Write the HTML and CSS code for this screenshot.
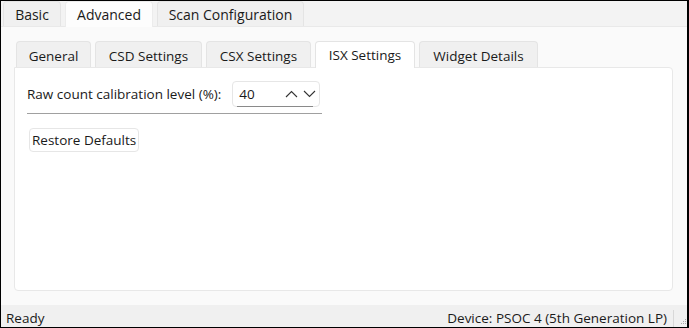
FILE: index.html
```html
<!DOCTYPE html>
<html>
<head>
<meta charset="utf-8">
<link rel="stylesheet" href="styles.css">
</head>
<body>
<div class="window">
  <div class="tabbar">
    <div class="tab tab-basic">Basic</div>
    <div class="tab tab-adv active">Advanced</div>
    <div class="tab tab-scan">Scan Configuration</div>
  </div>
  <div class="page">
    <div class="subtabbar">
      <div class="subtab st-general">General</div>
      <div class="subtab st-csd">CSD Settings</div>
      <div class="subtab st-csx">CSX Settings</div>
      <div class="subtab st-isx active">ISX Settings</div>
      <div class="subtab st-widget">Widget Details</div>
    </div>
    <div class="panel">
      <div class="field-row">
        <span class="label">Raw count calibration level (%):</span>
        <div class="spin">
          <span class="spin-value">40</span>
          <svg class="chev" width="13" height="8" viewBox="0 0 13 8"><path d="M1 7 L6.5 1.5 L12 7" fill="none" stroke="#333" stroke-width="1.1"/></svg>
          <svg class="chev" width="13" height="8" viewBox="0 0 13 8"><path d="M1 1 L6.5 6.5 L12 1" fill="none" stroke="#333" stroke-width="1.1"/></svg>
          <div class="spin-underline"></div>
        </div>
      </div>
      <div class="separator"></div>
      <button class="btn">Restore Defaults</button>
    </div>
  </div>
  <div class="statusbar">
    <span class="status-left">Ready</span>
    <span class="status-right">Device: PSOC 4 (5th Generation LP)</span>
    <span class="status-sep"></span>
    <svg class="grip" width="6" height="6" viewBox="0 0 6 6"><rect x="4" y="0" width="1" height="1" fill="#aaa"/><rect x="2" y="2" width="1" height="1" fill="#aaa"/><rect x="4" y="2" width="1" height="1" fill="#aaa"/><rect x="0" y="4" width="1" height="1" fill="#aaa"/><rect x="2" y="4" width="1" height="1" fill="#aaa"/><rect x="4" y="4" width="1" height="1" fill="#aaa"/></svg>
  </div>
</div>
</body>
</html>
```
FILE: styles.css
```css
* { box-sizing: border-box; }
html, body { margin: 0; padding: 0; }
body {
  width: 689px;
  height: 328px;
  font-family: "Open Sans", "Noto Sans", sans-serif;
  font-size: 13.5px;
  color: #1a1a1a;
  background: #000;
}
.window {
  width: 689px;
  height: 328px;
  border: 1px solid #000;
  border-right-width: 2px;
  display: flex;
  flex-direction: column;
  background: #f3f3f3;
}
.tabbar {
  height: 26px;
  display: flex;
  align-items: flex-end;
  gap: 4px;
  padding-left: 2px;
  background: #f3f3f3;
  border-bottom: 1px solid #e9e9e9;
}
.tab {
  height: 25px;
  border: 1px solid #e4e4e4;
  border-bottom: none;
  border-radius: 4px 4px 0 0;
  background: #f0f0f0;
  display: flex;
  align-items: center;
  justify-content: center;
  font-size: 14px;
}
.tab-basic { width: 58px; }
.tab-adv { width: 88px; }
.tab-scan { width: 147px; }
.tab.active {
  background: #fdfdfd;
  height: 26px;
  margin-bottom: -1px;
  border-color: #ececec;
}
.page {
  flex: 1;
  background: #fafafa;
  padding: 13px 14px 14px 13px;
  display: flex;
  flex-direction: column;
}
.subtabbar {
  display: flex;
  gap: 4px;
  padding-left: 2px;
  height: 27px;
  align-items: flex-end;
}
.subtab {
  height: 26px;
  border: 1px solid #e4e4e4;
  border-bottom: none;
  border-radius: 4px 4px 0 0;
  background: #f0f0f0;
  display: flex;
  align-items: center;
  justify-content: center;
  padding-top: 2px;
}
.st-general { width: 75px; }
.st-csd { width: 107px; }
.st-csx { width: 105px; }
.st-isx { width: 100px; }
.st-widget { width: 119px; }
.subtab.active {
  background: #fff;
  height: 27px;
  margin-bottom: -1px;
  position: relative;
  z-index: 1;
  padding-top: 0;
}
.panel {
  flex: 1;
  background: #fff;
  border: 1px solid #e8e8e8;
  border-radius: 0 4px 4px 4px;
  padding: 13px 12px;
  display: flex;
  flex-direction: column;
  align-items: flex-start;
}
.field-row {
  display: flex;
  align-items: center;
  gap: 11px;
}
.spin {
  position: relative;
  width: 88px;
  height: 26px;
  border: 1px solid #e6e6e6;
  border-radius: 4px;
  background: #fff;
  display: flex;
  align-items: center;
  padding-left: 6px;
  padding-right: 3px;
  gap: 5px;
}
.spin-value { flex: 1; }
.spin-underline {
  position: absolute;
  left: 4px;
  right: 6px;
  bottom: -1px;
  height: 1px;
  background: #8a8a8a;
}
.separator {
  width: 295px;
  height: 1px;
  background: #a0a0a0;
  margin-top: 6px;
  margin-bottom: 14px;
}
.btn {
  font-family: inherit;
  font-size: 13.5px;
  color: #1a1a1a;
  background: #fff;
  border: 1px solid #e6e6e6;
  border-radius: 4px;
  height: 24px;
  padding: 0 2px;
  margin-left: 2px;
}
.statusbar {
  height: 22px;
  background: #f0f0f0;
  display: flex;
  align-items: flex-end;
  padding-left: 5px;
  line-height: 18px;
}
.status-left { flex: 1; }
.status-right { margin-right: 6px; }
.status-sep { width: 1px; height: 17px; background: #d8d8d8; margin-right: 7px; }
.grip { margin-bottom: 2px; margin-right: 0; }
```
